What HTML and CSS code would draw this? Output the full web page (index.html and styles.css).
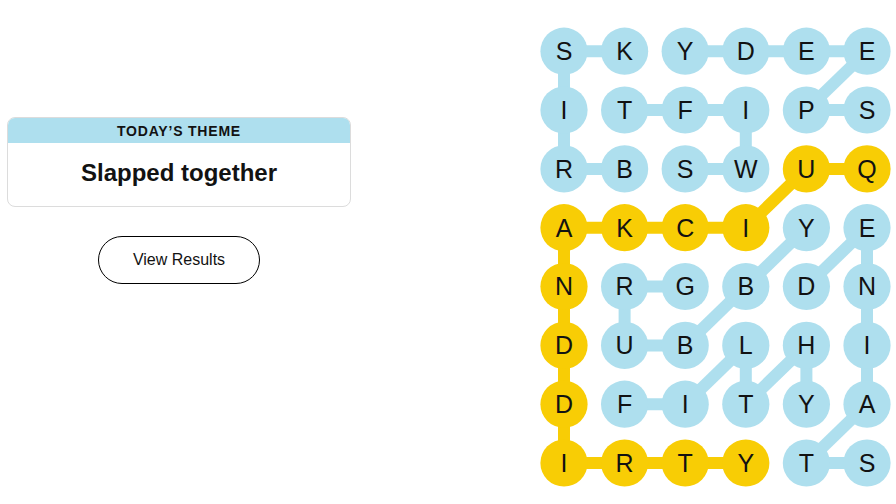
FILE: index.html
```html
<!DOCTYPE html>
<html lang="en">
<head>
<meta charset="utf-8">
<title>Strands</title>
<link rel="stylesheet" href="styles.css">
</head>
<body>
<main class="page">
  <section class="side">
    <div class="theme-card">
      <div class="theme-head">TODAY’S THEME</div>
      <div class="theme-body">Slapped together</div>
    </div>
    <button class="results-btn" type="button">View Results</button>
  </section>

  <svg class="board" width="366" height="504" viewBox="0 0 366 504" xmlns="http://www.w3.org/2000/svg">
    <g class="links blue">
      <line x1="34" y1="51.2" x2="94.6" y2="51.2"/>
      <line x1="34" y1="51.2" x2="34" y2="168.9"/>
      <line x1="34" y1="168.9" x2="94.6" y2="168.9"/>
      <line x1="155.2" y1="51.2" x2="337" y2="51.2"/>
      <line x1="337" y1="51.2" x2="276.4" y2="110"/>
      <line x1="276.4" y1="110" x2="337" y2="110"/>
      <line x1="94.6" y1="110" x2="215.8" y2="110"/>
      <line x1="215.8" y1="110" x2="215.8" y2="168.9"/>
      <line x1="155.2" y1="168.9" x2="215.8" y2="168.9"/>
      <line x1="276.4" y1="227.7" x2="215.8" y2="286.5"/>
      <line x1="215.8" y1="286.5" x2="155.2" y2="345.4"/>
      <line x1="155.2" y1="345.4" x2="94.6" y2="345.4"/>
      <line x1="94.6" y1="345.4" x2="94.6" y2="286.5"/>
      <line x1="94.6" y1="286.5" x2="155.2" y2="286.5"/>
      <line x1="337" y1="227.7" x2="276.4" y2="286.5"/>
      <line x1="337" y1="227.7" x2="337" y2="404.2"/>
      <line x1="337" y1="404.2" x2="276.4" y2="463"/>
      <line x1="276.4" y1="463" x2="337" y2="463"/>
      <line x1="94.6" y1="404.2" x2="155.2" y2="404.2"/>
      <line x1="155.2" y1="404.2" x2="215.8" y2="345.4"/>
      <line x1="215.8" y1="345.4" x2="215.8" y2="404.2"/>
      <line x1="215.8" y1="404.2" x2="276.4" y2="345.4"/>
      <line x1="276.4" y1="345.4" x2="276.4" y2="404.2"/>
    </g>
    <g class="links gold">
      <line x1="276.4" y1="168.9" x2="337" y2="168.9"/>
      <line x1="276.4" y1="168.9" x2="215.8" y2="227.7"/>
      <line x1="34" y1="227.7" x2="215.8" y2="227.7"/>
      <line x1="34" y1="227.7" x2="34" y2="463"/>
      <line x1="34" y1="463" x2="215.8" y2="463"/>
    </g>

    <g class="cells">
      <!-- row 0 -->
      <circle class="blue" cx="34" cy="51.2" r="23.6"/><text x="34" y="60">S</text>
      <circle class="blue" cx="94.6" cy="51.2" r="23.6"/><text x="94.6" y="60">K</text>
      <circle class="blue" cx="155.2" cy="51.2" r="23.6"/><text x="155.2" y="60">Y</text>
      <circle class="blue" cx="215.8" cy="51.2" r="23.6"/><text x="215.8" y="60">D</text>
      <circle class="blue" cx="276.4" cy="51.2" r="23.6"/><text x="276.4" y="60">E</text>
      <circle class="blue" cx="337" cy="51.2" r="23.6"/><text x="337" y="60">E</text>
      <!-- row 1 -->
      <circle class="blue" cx="34" cy="110" r="23.6"/><text x="34" y="118.8">I</text>
      <circle class="blue" cx="94.6" cy="110" r="23.6"/><text x="94.6" y="118.8">T</text>
      <circle class="blue" cx="155.2" cy="110" r="23.6"/><text x="155.2" y="118.8">F</text>
      <circle class="blue" cx="215.8" cy="110" r="23.6"/><text x="215.8" y="118.8">I</text>
      <circle class="blue" cx="276.4" cy="110" r="23.6"/><text x="276.4" y="118.8">P</text>
      <circle class="blue" cx="337" cy="110" r="23.6"/><text x="337" y="118.8">S</text>
      <!-- row 2 -->
      <circle class="blue" cx="34" cy="168.9" r="23.6"/><text x="34" y="177.7">R</text>
      <circle class="blue" cx="94.6" cy="168.9" r="23.6"/><text x="94.6" y="177.7">B</text>
      <circle class="blue" cx="155.2" cy="168.9" r="23.6"/><text x="155.2" y="177.7">S</text>
      <circle class="blue" cx="215.8" cy="168.9" r="23.6"/><text x="215.8" y="177.7">W</text>
      <circle class="gold" cx="276.4" cy="168.9" r="23.6"/><text x="276.4" y="177.7">U</text>
      <circle class="gold" cx="337" cy="168.9" r="23.6"/><text x="337" y="177.7">Q</text>
      <!-- row 3 -->
      <circle class="gold" cx="34" cy="227.7" r="23.6"/><text x="34" y="236.5">A</text>
      <circle class="gold" cx="94.6" cy="227.7" r="23.6"/><text x="94.6" y="236.5">K</text>
      <circle class="gold" cx="155.2" cy="227.7" r="23.6"/><text x="155.2" y="236.5">C</text>
      <circle class="gold" cx="215.8" cy="227.7" r="23.6"/><text x="215.8" y="236.5">I</text>
      <circle class="blue" cx="276.4" cy="227.7" r="23.6"/><text x="276.4" y="236.5">Y</text>
      <circle class="blue" cx="337" cy="227.7" r="23.6"/><text x="337" y="236.5">E</text>
      <!-- row 4 -->
      <circle class="gold" cx="34" cy="286.5" r="23.6"/><text x="34" y="295.3">N</text>
      <circle class="blue" cx="94.6" cy="286.5" r="23.6"/><text x="94.6" y="295.3">R</text>
      <circle class="blue" cx="155.2" cy="286.5" r="23.6"/><text x="155.2" y="295.3">G</text>
      <circle class="blue" cx="215.8" cy="286.5" r="23.6"/><text x="215.8" y="295.3">B</text>
      <circle class="blue" cx="276.4" cy="286.5" r="23.6"/><text x="276.4" y="295.3">D</text>
      <circle class="blue" cx="337" cy="286.5" r="23.6"/><text x="337" y="295.3">N</text>
      <!-- row 5 -->
      <circle class="gold" cx="34" cy="345.4" r="23.6"/><text x="34" y="354.2">D</text>
      <circle class="blue" cx="94.6" cy="345.4" r="23.6"/><text x="94.6" y="354.2">U</text>
      <circle class="blue" cx="155.2" cy="345.4" r="23.6"/><text x="155.2" y="354.2">B</text>
      <circle class="blue" cx="215.8" cy="345.4" r="23.6"/><text x="215.8" y="354.2">L</text>
      <circle class="blue" cx="276.4" cy="345.4" r="23.6"/><text x="276.4" y="354.2">H</text>
      <circle class="blue" cx="337" cy="345.4" r="23.6"/><text x="337" y="354.2">I</text>
      <!-- row 6 -->
      <circle class="gold" cx="34" cy="404.2" r="23.6"/><text x="34" y="413">D</text>
      <circle class="blue" cx="94.6" cy="404.2" r="23.6"/><text x="94.6" y="413">F</text>
      <circle class="blue" cx="155.2" cy="404.2" r="23.6"/><text x="155.2" y="413">I</text>
      <circle class="blue" cx="215.8" cy="404.2" r="23.6"/><text x="215.8" y="413">T</text>
      <circle class="blue" cx="276.4" cy="404.2" r="23.6"/><text x="276.4" y="413">Y</text>
      <circle class="blue" cx="337" cy="404.2" r="23.6"/><text x="337" y="413">A</text>
      <!-- row 7 -->
      <circle class="gold" cx="34" cy="463" r="23.6"/><text x="34" y="471.8">I</text>
      <circle class="gold" cx="94.6" cy="463" r="23.6"/><text x="94.6" y="471.8">R</text>
      <circle class="gold" cx="155.2" cy="463" r="23.6"/><text x="155.2" y="471.8">T</text>
      <circle class="gold" cx="215.8" cy="463" r="23.6"/><text x="215.8" y="471.8">Y</text>
      <circle class="blue" cx="276.4" cy="463" r="23.6"/><text x="276.4" y="471.8">T</text>
      <circle class="blue" cx="337" cy="463" r="23.6"/><text x="337" y="471.8">S</text>
    </g>
  </svg>
</main>
</body>
</html>
```

FILE: styles.css
```css
html, body {
  margin: 0;
  padding: 0;
  background: #ffffff;
}

body {
  font-family: "Liberation Sans", Arial, sans-serif;
  color: #000000;
}

.page {
  width: 896px;
  height: 504px;
  display: flex;
  justify-content: space-between;
  align-items: flex-start;
  padding-left: 7px;
  box-sizing: border-box;
  overflow: hidden;
}

.side {
  width: 344px;
  margin-top: 117px;
  display: flex;
  flex-direction: column;
  align-items: center;
}

.theme-card {
  width: 100%;
  box-sizing: border-box;
  border: 1px solid #dcdcdc;
  border-radius: 8px;
  overflow: hidden;
  background: #ffffff;
}

.theme-head {
  background: #aedfee;
  height: 25px;
  line-height: 26px;
  text-align: center;
  font-size: 14px;
  font-weight: 700;
  letter-spacing: 0.8px;
  color: #121212;
}

.theme-body {
  padding: 15px 0 18px;
  line-height: 30px;
  text-align: center;
  font-size: 24px;
  font-weight: 700;
  color: #121212;
}

.results-btn {
  margin-top: 29px;
  width: 162px;
  height: 48px;
  border: 1px solid #000000;
  border-radius: 24px;
  background: #ffffff;
  font-family: "Liberation Sans", Arial, sans-serif;
  font-size: 16px;
  color: #121212;
  padding: 0;
}

.board {
  display: block;
  flex: none;
}

.links line {
  stroke-width: 12;
  stroke-linecap: butt;
}

.links.blue line {
  stroke: #aedfee;
}

.links.gold line {
  stroke: #f8cd05;
}

.cells circle.blue {
  fill: #aedfee;
}

.cells circle.gold {
  fill: #f8cd05;
}

.cells text {
  font-family: "Liberation Sans", Arial, sans-serif;
  font-size: 25px;
  text-anchor: middle;
  fill: #121212;
}
```
